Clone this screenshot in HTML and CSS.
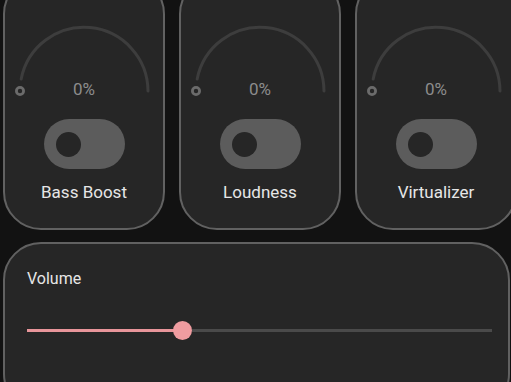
FILE: index.html
```html
<!DOCTYPE html>
<html lang="en">
<head>
    <meta charset="UTF-8">
    <meta name="viewport" content="width=device-width, initial-scale=1.0">
    <title>Equalizer</title>
    <link rel="stylesheet" href="styles.css">
</head>
<body>
    <main class="pagina">
        <section class="efeitos">
            <div class="cartao">
                <div class="dial">
                    <svg width="158" height="78" viewBox="0 0 158 78">
                        <path d="M 16.2 57 A 64 64 0 0 1 143 69" fill="none" stroke="#3d3d3d" stroke-width="3" stroke-linecap="round"/>
                        <circle cx="15" cy="69" r="3.6" fill="none" stroke="#6b6b6b" stroke-width="2.8"/>
                    </svg>
                    <span class="valor">0%</span>
                </div>
                <div class="chave"><span class="bola"></span></div>
                <p class="nome">Bass Boost</p>
            </div>
            <div class="cartao">
                <div class="dial">
                    <svg width="158" height="78" viewBox="0 0 158 78">
                        <path d="M 16.2 57 A 64 64 0 0 1 143 69" fill="none" stroke="#3d3d3d" stroke-width="3" stroke-linecap="round"/>
                        <circle cx="15" cy="69" r="3.6" fill="none" stroke="#6b6b6b" stroke-width="2.8"/>
                    </svg>
                    <span class="valor">0%</span>
                </div>
                <div class="chave"><span class="bola"></span></div>
                <p class="nome">Loudness</p>
            </div>
            <div class="cartao">
                <div class="dial">
                    <svg width="158" height="78" viewBox="0 0 158 78">
                        <path d="M 16.2 57 A 64 64 0 0 1 143 69" fill="none" stroke="#3d3d3d" stroke-width="3" stroke-linecap="round"/>
                        <circle cx="15" cy="69" r="3.6" fill="none" stroke="#6b6b6b" stroke-width="2.8"/>
                    </svg>
                    <span class="valor">0%</span>
                </div>
                <div class="chave"><span class="bola"></span></div>
                <p class="nome">Virtualizer</p>
            </div>
        </section>

        <section class="volume">
            <p class="titulo">Volume</p>
            <div class="barra">
                <div class="ativo" style="width: 155px"></div>
                <span class="pino"></span>
                <div class="resto"></div>
            </div>
        </section>
    </main>
</body>
</html>
```

FILE: styles.css
```css
*, *::before, *::after
{
    box-sizing: border-box;
    margin: 0;
    padding: 0;
}
html, body
{
    width: 511px;
    height: 382px;
    overflow: hidden;
}
body
{
    background-color: #121212;
    font-family: Roboto, "Noto Sans", sans-serif;
    color: #e6e6e6;
}
.pagina
{
    margin-top: -24px;
    padding-left: 3px;
}
.efeitos
{
    display: flex;
    gap: 14px;
}
.cartao
{
    flex: none;
    width: 162px;
    height: 254px;
    background-color: #262626;
    border: 2px solid #616161;
    border-radius: 38px;
    padding-top: 44px;
    display: flex;
    flex-direction: column;
    align-items: center;
}
.dial
{
    position: relative;
    width: 158px;
    height: 78px;
}
.dial svg
{
    display: block;
}
.valor
{
    position: absolute;
    left: 0;
    right: 0;
    top: 56px;
    text-align: center;
    font-size: 17px;
    line-height: 22px;
    color: #8c8c8c;
}
.chave
{
    margin-top: 19px;
    width: 81px;
    height: 50px;
    border-radius: 25px;
    background-color: #5c5c5c;
    display: flex;
    align-items: center;
    padding-left: 12px;
}
.bola
{
    width: 25px;
    height: 25px;
    border-radius: 50%;
    background-color: #262626;
}
.nome
{
    margin-top: 12px;
    font-size: 17px;
    line-height: 22px;
}
.volume
{
    margin-top: 12px;
    width: 507px;
    height: 170px;
    background-color: #262626;
    border: 2px solid #616161;
    border-radius: 38px;
    padding: 24px 16px 0 22px;
}
.titulo
{
    font-size: 16px;
    line-height: 22px;
}
.barra
{
    margin-top: 30px;
    height: 20px;
    display: flex;
    align-items: center;
}
.ativo
{
    height: 3px;
    background-color: #e8959a;
}
.pino
{
    flex: none;
    width: 19px;
    height: 19px;
    border-radius: 50%;
    background-color: #ef9ca0;
    margin-left: -9px;
}
.resto
{
    flex: 1;
    height: 3px;
    background-color: #4a4a4a;
}
```
